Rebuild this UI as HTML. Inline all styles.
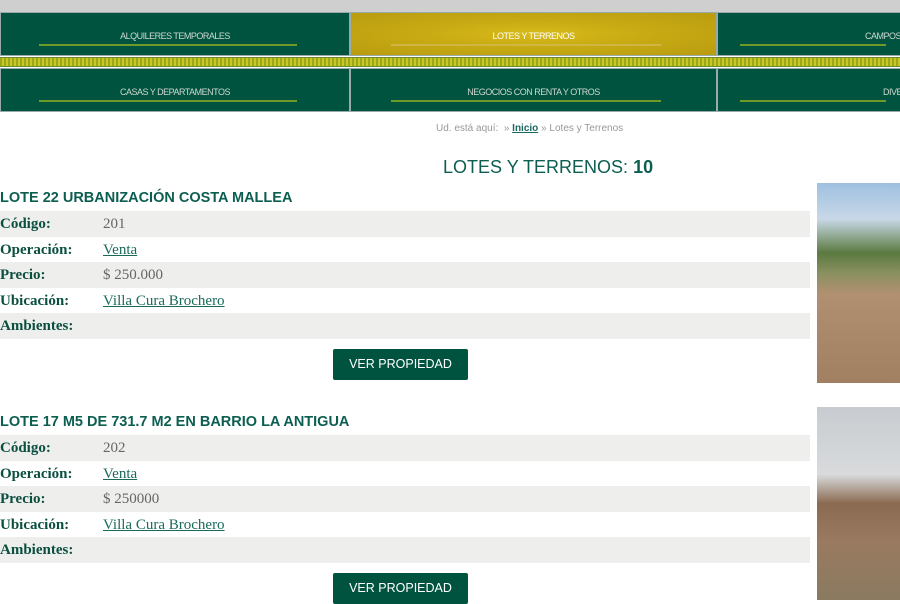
<!DOCTYPE html>
<html><head><meta charset="utf-8"><style>
*{margin:0;padding:0;box-sizing:border-box}
body{width:900px;height:600px;overflow:hidden;background:#fff;font-family:"Liberation Sans",sans-serif;position:relative}
.top{position:absolute;left:0;top:0;width:900px;height:12px;background:#cfcfcf}
.nav{position:absolute;height:44px;background:#00533f;border:1px solid #9aa;color:#cfd8d0;font-size:9px;text-align:center;line-height:46px;letter-spacing:-0.5px}
.nav i{position:absolute;left:11%;right:15%;bottom:9px;height:2px;background:#6f9a2a}
.nav.y{background:radial-gradient(ellipse at 50% 50%,#d8bb1a 0%,#c9ab14 40%,#b99c10 100%);color:#fff}
.nav.y i{background:#d0b640}
.stripe{position:absolute;left:0;top:57px;width:900px;height:10px;background:repeating-linear-gradient(90deg,#9aa820 0 2px,#c8c820 2px 4px);border-top:1px solid #6a8a30;border-bottom:1px solid #6a8a30}
.crumb{position:absolute;left:436px;top:123px;font-size:10px;color:#999}
.crumb b{color:#1a6a60;text-decoration:underline}
h1{position:absolute;left:443px;top:157px;font-size:18px;font-weight:normal;color:#0b5e50}
h1 b{font-weight:bold}
.item{position:absolute;left:0;width:810px}
.item h2{font-size:14.5px;color:#0b5e50;font-weight:bold;height:26px;line-height:26px;margin-top:1px}
.row{height:25.6px;line-height:27px;font-family:"Liberation Serif",serif;font-size:15px;color:#666;position:relative}
.row span{position:absolute;left:0;font-weight:bold;color:#0b4f40}
.row em{position:absolute;left:103px;font-style:normal}
.row a{color:#1a6a5a;text-decoration:underline}
.btn{position:absolute;left:333px;width:135px;height:31px;background:#00533f;color:#fff;font-size:12.5px;text-align:center;line-height:31px;border-radius:2px}
.ph{position:absolute;left:817px;width:83px;background:linear-gradient(180deg,#9fc0e0 0%,#c8d8e8 18%,#5a7a40 35%,#8a9060 45%,#b09070 55%,#a08060 100%)}
</style></head><body>
<div class="top"></div>
<div class="nav" style="left:0;top:12px;width:350px">ALQUILERES TEMPORALES<i></i></div>
<div class="nav y" style="left:350px;top:12px;width:367px">LOTES Y TERRENOS<i></i></div>
<div class="nav" style="left:717px;top:12px;width:200px;text-align:left;padding-left:147px">CAMPOS Y<i></i></div>
<div class="stripe"></div>
<div class="nav" style="left:0;top:68px;width:350px">CASAS Y DEPARTAMENTOS<i></i></div>
<div class="nav" style="left:350px;top:68px;width:367px">NEGOCIOS CON RENTA Y OTROS<i></i></div>
<div class="nav" style="left:717px;top:68px;width:200px;text-align:left;padding-left:165px">DIVE<i></i></div>
<div class="crumb">Ud. está aquí: &nbsp;» <b>Inicio</b> » Lotes y Terrenos</div>
<h1>LOTES Y TERRENOS: <b>10</b></h1>
<div class="item" style="top:184px"><h2>LOTE 22 URBANIZACIÓN COSTA MALLEA</h2>
<div>
<div class="row" style="background:#eeeeec"><span>Código:</span><em>201</em></div>
<div class="row" style="background:#fff"><span>Operación:</span><em><a>Venta</a></em></div>
<div class="row" style="background:#eeeeec"><span>Precio:</span><em>$ 250.000</em></div>
<div class="row" style="background:#fff"><span>Ubicación:</span><em><a>Villa Cura Brochero</a></em></div>
<div class="row" style="background:#eeeeec"><span>Ambientes:</span></div>
</div></div>
<div class="btn" style="top:349px">VER PROPIEDAD</div>
<div class="item" style="top:408px"><h2>LOTE 17 M5 DE 731.7 M2 EN BARRIO LA ANTIGUA</h2>
<div>
<div class="row" style="background:#eeeeec"><span>Código:</span><em>202</em></div>
<div class="row" style="background:#fff"><span>Operación:</span><em><a>Venta</a></em></div>
<div class="row" style="background:#eeeeec"><span>Precio:</span><em>$ 250000</em></div>
<div class="row" style="background:#fff"><span>Ubicación:</span><em><a>Villa Cura Brochero</a></em></div>
<div class="row" style="background:#eeeeec"><span>Ambientes:</span></div>
</div></div>
<div class="btn" style="top:573px">VER PROPIEDAD</div>
<div class="ph" style="top:183px;height:200px"></div>
<div class="ph" style="top:407px;height:193px;background:linear-gradient(180deg,#c8ccd0 0%,#d8dadc 35%,#8a6a50 50%,#9a7a60 70%,#8a7a60 100%)"></div>
</body></html>
